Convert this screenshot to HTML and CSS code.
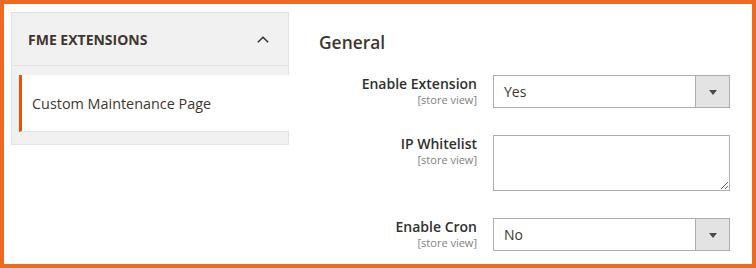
FILE: index.html
```html
<!DOCTYPE html>
<html lang="en">
<head>
  <meta charset="UTF-8" />
  <title>FME Extensions - Configuration</title>
  <link rel="stylesheet" href="styles.css">
</head>
<body>
  <aside class="page-nav">
    <div class="nav-title">
      <strong>FME Extensions</strong>
      <svg class="chevron" width="12" height="7" viewBox="0 0 12 7">
        <polyline points="0.8,6.3 6,1.2 11.2,6.3" fill="none" stroke="#303030" stroke-width="1.5" />
      </svg>
    </div>
    <ul class="nav-items">
      <li class="nav-item active">Custom Maintenance Page</li>
    </ul>
  </aside>

  <main class="config">
    <h2 class="section-title">General</h2>
    <div class="fields">
      <label class="field-label" for="enable-ext">
        <span>Enable Extension</span>
        <span class="scope">[store view]</span>
      </label>
      <div class="select-wrap">
        <select id="enable-ext">
          <option>Yes</option>
          <option>No</option>
        </select>
      </div>

      <label class="field-label" for="ip-whitelist">
        <span>IP Whitelist</span>
        <span class="scope">[store view]</span>
      </label>
      <textarea id="ip-whitelist"></textarea>

      <label class="field-label" for="enable-cron">
        <span>Enable Cron</span>
        <span class="scope">[store view]</span>
      </label>
      <div class="select-wrap">
        <select id="enable-cron">
          <option>No</option>
          <option>Yes</option>
        </select>
      </div>
    </div>
  </main>
</body>
</html>
```

FILE: styles.css
```css
:root {
  --frame: #ef6a21;
  --accent: #eb5202;
  --text: #303030;
  --heading: #41362f;
  --muted: #808080;
  --nav-bg: #f1f1f1;
  --nav-border: #e3e3e3;
  --input-border: #adadad;
}

* {
  box-sizing: border-box;
  margin: 0;
  padding: 0;
}

html, body {
  height: 100%;
}

body {
  font-family: "Open Sans", "Liberation Sans", sans-serif;
  font-size: 14px;
  color: var(--text);
  background: #fff;
  border: 4px solid var(--frame);
  padding: 8px 0 0 7px;
  display: flex;
  align-items: flex-start;
  overflow: hidden;
}

/* left tabs */
.page-nav {
  width: 278px;
  flex-shrink: 0;
  background: var(--nav-bg);
  border: 1px solid var(--nav-border);
  padding-bottom: 12px;
}

.nav-title {
  height: 53px;
  display: flex;
  align-items: center;
  justify-content: space-between;
  padding: 0 19px 0 16px;
  border-bottom: 1px solid var(--nav-border);
}

.nav-title strong {
  font-weight: 700;
  text-transform: uppercase;
  color: var(--heading);
  font-size: 14px;
}

.chevron {
  display: block;
  margin-top: 1px;
}

.nav-items {
  list-style: none;
  padding-top: 9px;
}

.nav-item {
  height: 57px;
  display: flex;
  align-items: center;
  margin: 0 -1px 0 7px;
  padding-left: 10px;
  background: #fff;
  border-left: 3px solid var(--accent);
  border-bottom: 1px solid var(--nav-border);
  color: var(--heading);
  font-size: 14.4px;
}

/* config form */
.config {
  flex: 1;
  padding-left: 30px;
}

.section-title {
  font-size: 17.4px;
  font-weight: 600;
  line-height: 20px;
  color: var(--heading);
  margin: 20px 0 23px;
}

.fields {
  display: grid;
  grid-template-columns: 158px 237px;
  column-gap: 16px;
  row-gap: 27px;
  align-items: start;
}

.field-label {
  display: flex;
  flex-direction: column;
  align-items: flex-end;
  text-align: right;
  padding-top: 1px;
  font-weight: 600;
  line-height: 1.2;
}

.scope {
  font-size: 11px;
  font-weight: 400;
  color: var(--muted);
  line-height: 1.2;
}

.select-wrap {
  position: relative;
  height: 33px;
}

.select-wrap select {
  appearance: none;
  -webkit-appearance: none;
  width: 100%;
  height: 33px;
  border: 1px solid var(--input-border);
  border-radius: 0;
  background: #fff;
  padding: 0 40px 0 10px;
  font-family: inherit;
  font-size: 14px;
  color: var(--heading);
}

.select-wrap::after {
  content: "";
  position: absolute;
  top: 1px;
  right: 1px;
  bottom: 1px;
  width: 33px;
  background: #e3e3e3;
  border-left: 1px solid var(--input-border);
}

.select-wrap::before {
  content: "";
  position: absolute;
  z-index: 1;
  top: 15px;
  right: 13px;
  border-left: 4px solid transparent;
  border-right: 4px solid transparent;
  border-top: 5px solid #514943;
}

textarea {
  display: block;
  width: 237px;
  height: 56px;
  border: 1px solid var(--input-border);
  border-radius: 0;
  resize: vertical;
  font-family: inherit;
  font-size: 14px;
  padding: 6px 10px;
}
```
